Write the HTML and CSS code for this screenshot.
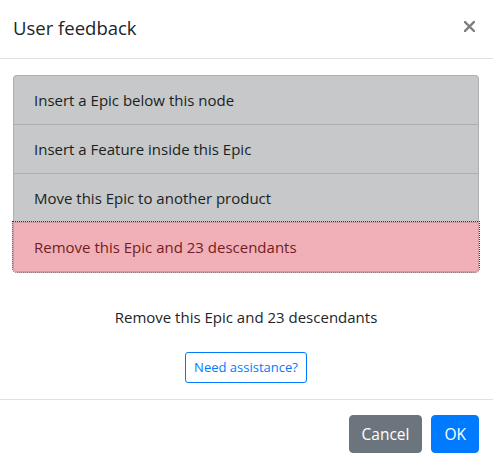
FILE: index.html
```html
<!DOCTYPE html>
<html lang="en">
<head>
<meta charset="utf-8">
<title>User feedback</title>
<link rel="stylesheet" href="styles.css">
</head>
<body>
<div class="modal">
  <div class="modal-header">
    <h5 class="modal-title">User feedback</h5>
    <button class="close" aria-label="Close">
      <svg width="11" height="11" viewBox="0 0 11 11"><path d="M1 1 L10 10 M10 1 L1 10" stroke="#000" stroke-width="2.4" stroke-linecap="square"/></svg>
    </button>
  </div>
  <div class="modal-body">
    <div class="list-group">
      <button class="item">Insert a Epic below this node</button>
      <button class="item">Insert a Feature inside this Epic</button>
      <button class="item">Move this Epic to another product</button>
      <button class="item danger">Remove this Epic and 23 descendants</button>
    </div>
    <p class="summary">Remove this Epic and 23 descendants</p>
    <div class="help"><button class="btn-outline">Need assistance?</button></div>
  </div>
  <div class="modal-footer">
    <button class="btn secondary">Cancel</button>
    <button class="btn primary">OK</button>
  </div>
</div>
</body>
</html>
```
FILE: styles.css
```css
* { box-sizing: border-box; }
html, body { margin: 0; padding: 0; background: #fff; }
body {
  font-family: "Open Sans", "Noto Sans", sans-serif;
  font-size: 15px;
  line-height: 24px;
  color: #212529;
}
button { font-family: inherit; cursor: pointer; }
.modal { width: 493px; }
.modal-header {
  display: flex;
  justify-content: space-between;
  align-items: flex-start;
  padding: 13px 14px 15px 13px;
  border-bottom: 1px solid #dee2e6;
}
.modal-title {
  margin: 0;
  font-size: 18.5px;
  line-height: 30px;
  font-weight: 400;
}
.close {
  margin: 8px 4px 0 0;
  padding: 0;
  border: 0;
  background: none;
  opacity: .5;
  line-height: 0;
}
.modal-body { padding: 16px 14px 16px 13px; }
.list-group { display: flex; flex-direction: column; }
.item {
  display: block;
  width: 100%;
  text-align: left;
  font-size: 15px;
  line-height: 24px;
  padding: 12px 20px;
  background: #c6c8ca;
  color: #1b1e21;
  border: 1px solid rgba(0,0,0,.125);
  margin: -1px 0 0 0;
}
.item:first-child { margin-top: 0; border-radius: 4px 4px 0 0; }
.item:last-child { border-radius: 0 0 4px 4px; }
.item.danger {
  background: #f1b0b7;
  color: #721c24;
  position: relative;
  outline: 1px dotted #721c24;
}
.summary { margin: 33px 0 0; text-align: center; }
.help { margin-top: 23px; text-align: center; }
.btn-outline {
  font-size: 13px;
  line-height: 21px;
  padding: 4px 8px;
  border: 1px solid #007bff;
  border-radius: 3px;
  background: #fff;
  color: #007bff;
}
.modal-footer {
  display: flex;
  justify-content: flex-end;
  gap: 9px;
  padding: 15px 14px 13px;
  border-top: 1px solid #dee2e6;
}
.btn {
  font-size: 15.5px;
  line-height: 24px;
  padding: 6px 12px;
  border: 1px solid transparent;
  border-radius: 4px;
  color: #fff;
}
.btn.secondary { background: #6c757d; border-color: #6c757d; }
.btn.primary { background: #007bff; border-color: #007bff; }
```
